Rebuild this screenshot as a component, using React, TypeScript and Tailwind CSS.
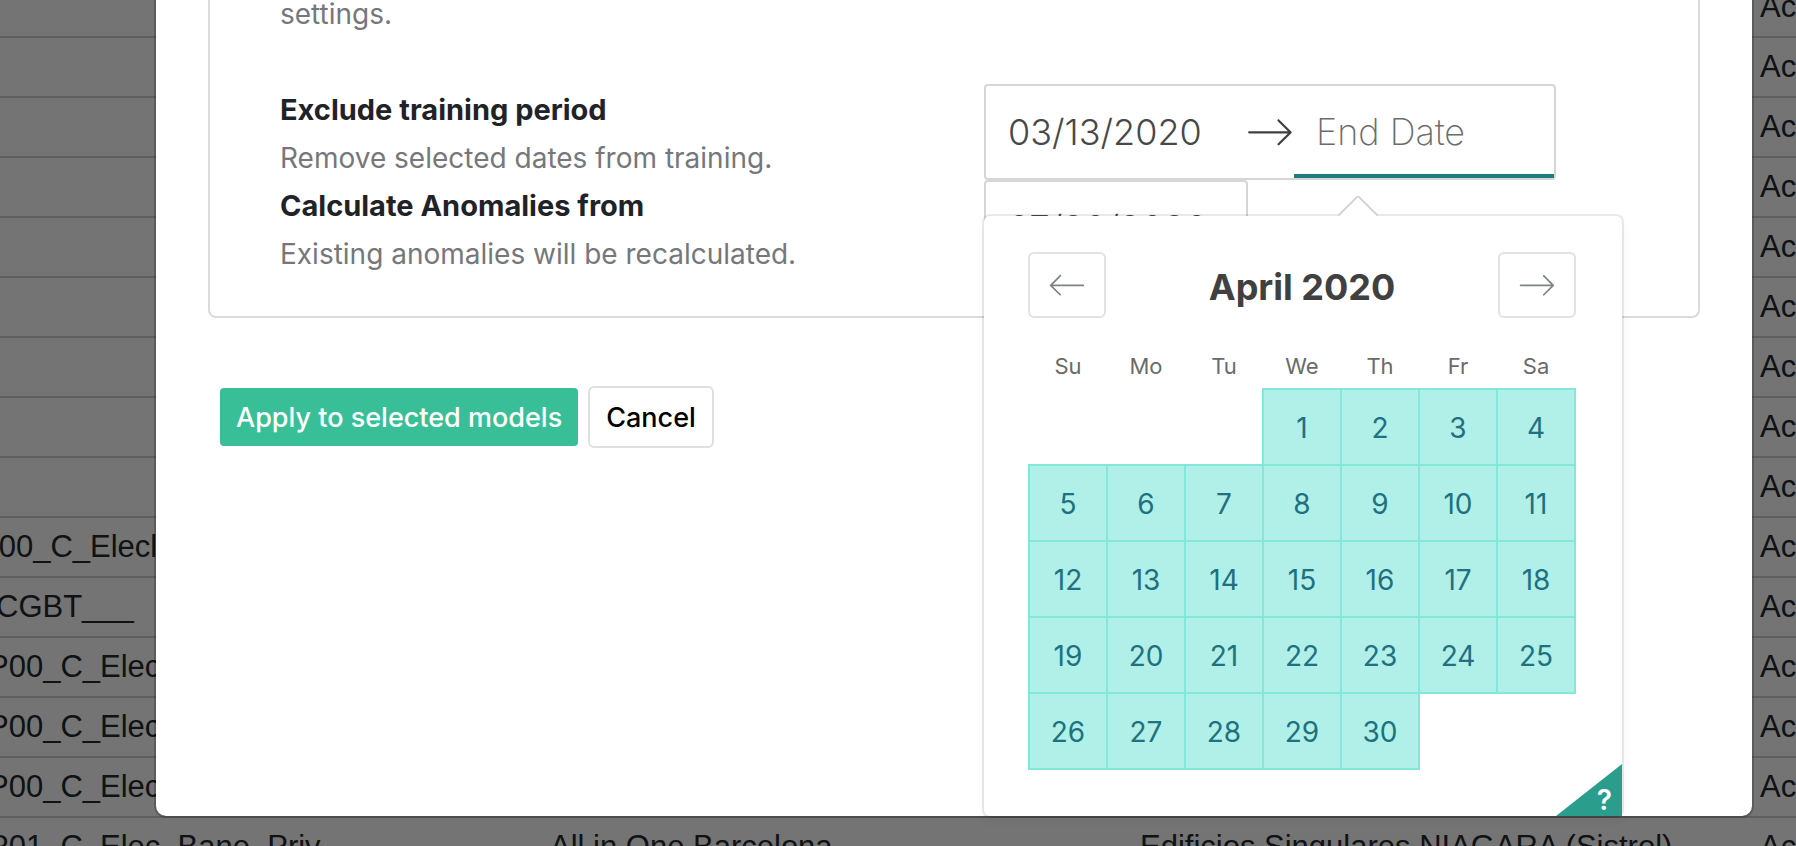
import React from "react";

const weekdays = ["Su", "Mo", "Tu", "We", "Th", "Fr", "Sa"];

const weeks: (number | null)[][] = [
  [null, null, null, 1, 2, 3, 4],
  [5, 6, 7, 8, 9, 10, 11],
  [12, 13, 14, 15, 16, 17, 18],
  [19, 20, 21, 22, 23, 24, 25],
  [26, 27, 28, 29, 30, null, null],
];

type Row = { model: string; shift: string; building?: string; project?: string };

const empty: Row = { model: "", shift: "" };

const rows: Row[] = [
  ...Array.from({ length: 9 }, () => empty),
  { model: "P00_C_Elecl", shift: "-ml-[22px]" },
  { model: "CGBT___", shift: "-ml-1" },
  { model: "P00_C_Elec", shift: "-ml-3" },
  { model: "P00_C_Elec", shift: "-ml-3" },
  { model: "P00_C_Elec", shift: "-ml-3" },
  {
    model: "P01_C_Elec_Bane_Priv",
    shift: "-ml-3",
    building: "All in One Barcelona",
    project: "Edificios Singulares NIAGARA (Sistrol)",
  },
];

function ArrowRight({ className }: { className: string }) {
  return (
    <svg viewBox="0 0 1000 1000" className={className} fill="currentColor" aria-hidden="true">
      <path d="M694.4 242.4l249.1 249.1c11 11 11 21 0 32L694.4 772.7c-5 5-10 7-16 7s-11-2-16-7c-11-11-11-21 0-32l210.1-210.1H67.1c-13 0-23-10-23-23s10-23 23-23h805.4L662.4 274.5c-21-21.1 11-53.1 32-32.1z" />
    </svg>
  );
}

function ArrowLeft({ className }: { className: string }) {
  return (
    <svg viewBox="0 0 1000 1000" className={className} fill="currentColor" aria-hidden="true">
      <path d="M336.2 274.5l-210.1 210h805.4c13 0 23 10 23 23s-10 23-23 23H126.1l210.1 210.1c11 11 11 21 0 32-5 5-10 7-16 7s-11-2-16-7l-249.1-249c-11-11-11-21 0-32l249.1-249.1c21-21.1 53-10.9 32 32z" />
    </svg>
  );
}

function ModelsTable() {
  return (
    <table className="-mt-[23px] w-full table-fixed border-collapse bg-[#e9e9e9] font-['Liberation_Sans',sans-serif] text-[31px] leading-[48px] whitespace-nowrap text-[#212529]">
      <colgroup>
        <col className="w-[542px]" />
        <col className="w-[590px]" />
        <col />
        <col className="w-[44px]" />
      </colgroup>
      <tbody>
        {rows.map((row, i) => (
          <tr key={i} className="h-[60px] border-b-2 border-[#bfbfbf]">
            <td className="p-0">
              <div className={row.shift}>{row.model}</div>
            </td>
            <td className="px-2 py-0">{row.building}</td>
            <td className="px-2 py-0">{row.project}</td>
            <td className="overflow-hidden py-0 pr-0 pl-2">Ac</td>
          </tr>
        ))}
      </tbody>
    </table>
  );
}

function Calendar() {
  return (
    <div className="absolute top-[132px] left-0 z-10 h-[600px] w-[638px] rounded-md bg-white shadow-[0_4px_12px_rgba(0,0,0,0.05),0_0_0_2px_rgba(0,0,0,0.08)]">
      <svg viewBox="0 0 20 10" className="absolute -top-5 left-[354px] h-5 w-10" aria-hidden="true">
        <path d="M0,10 20,10 10,0z" fill="#fff" />
        <path d="M0,10 10,0 20,10" fill="none" stroke="#d5d5d5" />
      </svg>
      <div className="flex items-center justify-between pt-9 pr-[46px] pl-11">
        <button
          type="button"
          aria-label="Previous month"
          className="rounded-md border-2 border-[#e2e2e2] px-[18px] py-3 text-[#7e8485]"
        >
          <ArrowLeft className="size-[38px]" />
        </button>
        <h2 className="pt-1 text-[36px] leading-[54px] font-bold text-[#404040]">April 2020</h2>
        <button
          type="button"
          aria-label="Next month"
          className="rounded-md border-2 border-[#e2e2e2] px-[18px] py-3 text-[#7e8485]"
        >
          <ArrowRight className="size-[38px]" />
        </button>
      </div>
      <table className="mt-8 ml-11 table-fixed border-collapse text-center">
        <thead>
          <tr className="h-[39px] align-top text-[22px] leading-8 text-[#6a6a6a]">
            {weekdays.map((d) => (
              <th key={d} scope="col" className="w-[78px] p-0 font-normal">
                {d}
              </th>
            ))}
          </tr>
        </thead>
        <tbody>
          {weeks.map((week, i) => (
            <tr key={i} className="h-[76px]">
              {week.map((day, j) =>
                day === null ? (
                  <td key={j} className="p-0" />
                ) : (
                  <td key={j} className="border-2 border-[#83e7da] bg-[#b0f0e8] p-0">
                    <button type="button" className="h-[74px] w-full pt-0.5 text-[28px] text-[#207080]">
                      {day}
                    </button>
                  </td>
                ),
              )}
            </tr>
          ))}
        </tbody>
      </table>
      <button
        type="button"
        aria-label="Keyboard shortcuts"
        className="absolute right-0 bottom-0 flex h-[52px] w-[66px] items-end justify-end bg-[#2b9d8c] pr-2.5 text-[28px] leading-8 font-semibold text-white [clip-path:polygon(100%_0,100%_100%,0_100%)]"
      >
        ?
      </button>
    </div>
  );
}

const dateInput =
  "block h-[92px] w-[260px] border-b-4 px-[22px] pt-[22px] pb-[18px] text-[36px] leading-[48px] font-light text-[#484848] outline-none placeholder:font-extralight placeholder:text-[#6c6c6c]";

export default function App() {
  return (
    <div className="relative h-screen overflow-hidden bg-[#e9e9e9] font-['Inter',sans-serif]">
      <ModelsTable />
      <div className="absolute inset-0 bg-black/50">
        <div
          role="dialog"
          aria-label="Model settings"
          className="mr-[42px] ml-[154px] rounded-b-xl border-2 border-t-0 border-black/20 bg-white bg-clip-padding px-[52px] pb-[368px]"
        >
          <section className="-mt-2.5 rounded-b-lg border-2 border-t-0 border-[#dadada] pb-[38px] text-[28px] leading-[48px]">
            <p className="mb-[46px] pl-[70px] text-[#76777b]">settings.</p>
            <div className="grid grid-cols-2">
              <div className="pt-0.5 pl-[70px]">
                <label htmlFor="start-date" className="block text-[29px] font-bold text-[#1f2327]">
                  Exclude training period
                </label>
                <p className="text-[#76777b]">Remove selected dates from training.</p>
                <label htmlFor="anomalies-date" className="block text-[29px] font-bold text-[#1f2327]">
                  Calculate Anomalies from
                </label>
                <p className="text-[#76777b]">Existing anomalies will be recalculated.</p>
              </div>
              <div className="relative h-[194px] pl-[30px]">
                <div className="relative">
                  <div className="flex w-[572px] items-center rounded-sm border-2 border-[#d6d6d6] bg-white">
                    <input
                      id="start-date"
                      type="text"
                      defaultValue="03/13/2020"
                      className={dateInput + " border-transparent"}
                    />
                    <ArrowRight className="size-12 text-[#404040]" />
                    <input
                      type="text"
                      aria-label="End Date"
                      placeholder="End Date"
                      className={dateInput + " border-[#1e7c80]"}
                    />
                  </div>
                  <div className="h-[96px] w-[264px] rounded-sm border-2 border-[#d6d6d6] bg-white">
                    <input
                      id="anomalies-date"
                      type="text"
                      defaultValue="07/20/2020"
                      className={dateInput + " border-transparent"}
                    />
                  </div>
                  <Calendar />
                </div>
              </div>
            </div>
          </section>
          <div className="mt-[68px] ml-3 flex items-center gap-2.5 text-[27px] leading-[42px] font-medium">
            <button type="button" className="rounded-sm bg-[#39bf98] px-4 pt-[9px] pb-[7px] text-white">
              Apply to selected models
            </button>
            <button
              type="button"
              className="rounded-md border-2 border-[#dfdfdf] px-4 pt-[9px] pb-[7px] text-black"
            >
              Cancel
            </button>
          </div>
        </div>
      </div>
    </div>
  );
}
